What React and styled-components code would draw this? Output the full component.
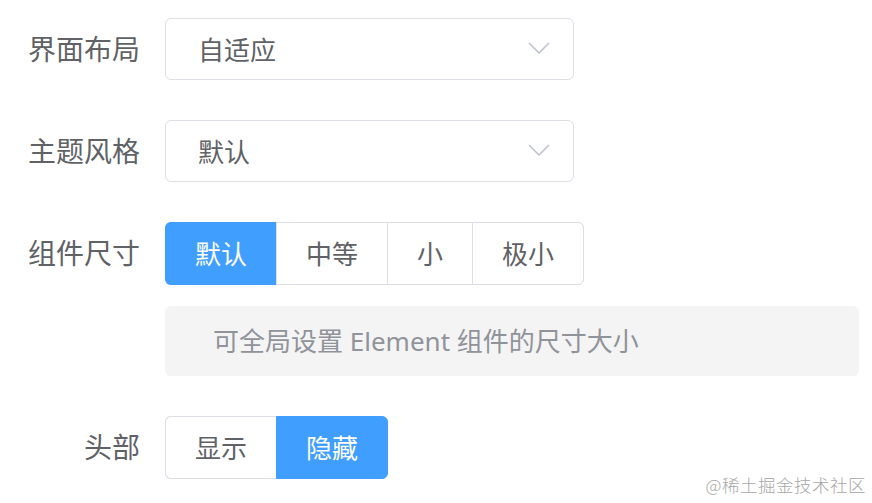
import React from "react";
import styled, { createGlobalStyle } from "styled-components";

const Global = createGlobalStyle`
  html, body { margin: 0; padding: 0; background: #fff; }
  body { font-family: "Noto Sans", "Noto Sans CJK SC", sans-serif; }
`;

const Page = styled.div`
  position: relative;
  width: 872px;
  height: 503px;
  overflow: hidden;
  padding-top: 18px;
  box-sizing: border-box;
`;

const Item = styled.div`
  display: flex;
  align-items: flex-start;
  margin-bottom: 40px;
`;

const Label = styled.div`
  width: 165px;
  box-sizing: border-box;
  padding: 0 25px 3px 0;
  height: ${(p) => p.$h || 62}px;
  display: flex;
  align-items: center;
  justify-content: flex-end;
  font-size: 28px;
  color: #606266;
  font-family: "Noto Sans CJK SC", sans-serif;
  white-space: nowrap;
`;

const Content = styled.div`
  display: flex;
  flex-direction: column;
  gap: 21px;
`;

const Select = styled.div`
  width: 409px;
  height: 62px;
  box-sizing: border-box;
  border: 1px solid #dcdfe6;
  border-radius: 6px;
  display: flex;
  align-items: center;
  justify-content: space-between;
  padding: 0 23px 2px 32px;
  font-size: 26px;
  color: #606266;
  font-family: "Noto Sans CJK SC", sans-serif;
`;

const Arrow = styled.svg`
  width: 22px;
  height: 12px;
  display: block;
`;

const Group = styled.div`
  display: inline-flex;
  align-self: flex-start;
  height: 63px;
  box-sizing: border-box;
  border: 1px solid #dcdfe6;
  border-radius: 6px;
`;

const Seg = styled.div`
  height: 63px;
  margin-top: -1px;
  box-sizing: border-box;
  display: flex;
  align-items: center;
  justify-content: center;
  padding: 0 29px 2px;
  font-size: 26px;
  font-family: "Noto Sans CJK SC", sans-serif;
  color: ${(p) => (p.$active ? "#fff" : "#606266")};
  background: ${(p) => (p.$active ? "#409eff" : "#fff")};
  border-left: 1px solid ${(p) => (p.$active ? "#409eff" : "#dcdfe6")};
  border-top: 1px solid ${(p) => (p.$active ? "#409eff" : "#dcdfe6")};
  border-bottom: 1px solid ${(p) => (p.$active ? "#409eff" : "#dcdfe6")};
  &:first-child {
    margin-left: -1px;
    border-radius: 6px 0 0 6px;
  }
  &:last-child {
    margin-right: -1px;
    border-right: 1px solid ${(p) => (p.$active ? "#409eff" : "#dcdfe6")};
    border-radius: 0 6px 6px 0;
  }
`;

const Alert = styled.div`
  width: 694px;
  height: 70px;
  box-sizing: border-box;
  background: #f4f4f5;
  border-radius: 6px;
  display: flex;
  align-items: center;
  padding: 0 0 2px 48px;
  font-size: 26px;
  color: #909399;
  font-family: "Noto Sans", "Noto Sans CJK SC", sans-serif;
  white-space: nowrap;
`;

const Watermark = styled.div`
  position: absolute;
  right: 6px;
  bottom: 6px;
  font-size: 17.5px;
  font-weight: 300;
  color: #a8a8a8;
  font-family: "Noto Sans CJK SC", sans-serif;
  letter-spacing: 0.5px;
`;

const Chevron = () => (
  <Arrow viewBox="0 0 22 12">
    <path d="M1 1 L11 11 L21 1" fill="none" stroke="#c0c4cc" strokeWidth="1.6" />
  </Arrow>
);

export default function App() {
  return (
    <>
      <Global />
      <Page>
        <Item>
          <Label>界面布局</Label>
          <Select>
            <span>自适应</span>
            <Chevron />
          </Select>
        </Item>
        <Item>
          <Label>主题风格</Label>
          <Select>
            <span>默认</span>
            <Chevron />
          </Select>
        </Item>
        <Item>
          <Label $h={63}>组件尺寸</Label>
          <Content>
            <Group>
              <Seg $active>默认</Seg>
              <Seg>中等</Seg>
              <Seg>小</Seg>
              <Seg>极小</Seg>
            </Group>
            <Alert>可全局设置 Element 组件的尺寸大小</Alert>
          </Content>
        </Item>
        <Item>
          <Label $h={63}>头部</Label>
          <Group>
            <Seg>显示</Seg>
            <Seg $active>隐藏</Seg>
          </Group>
        </Item>
        <Watermark>@稀土掘金技术社区</Watermark>
      </Page>
    </>
  );
}
